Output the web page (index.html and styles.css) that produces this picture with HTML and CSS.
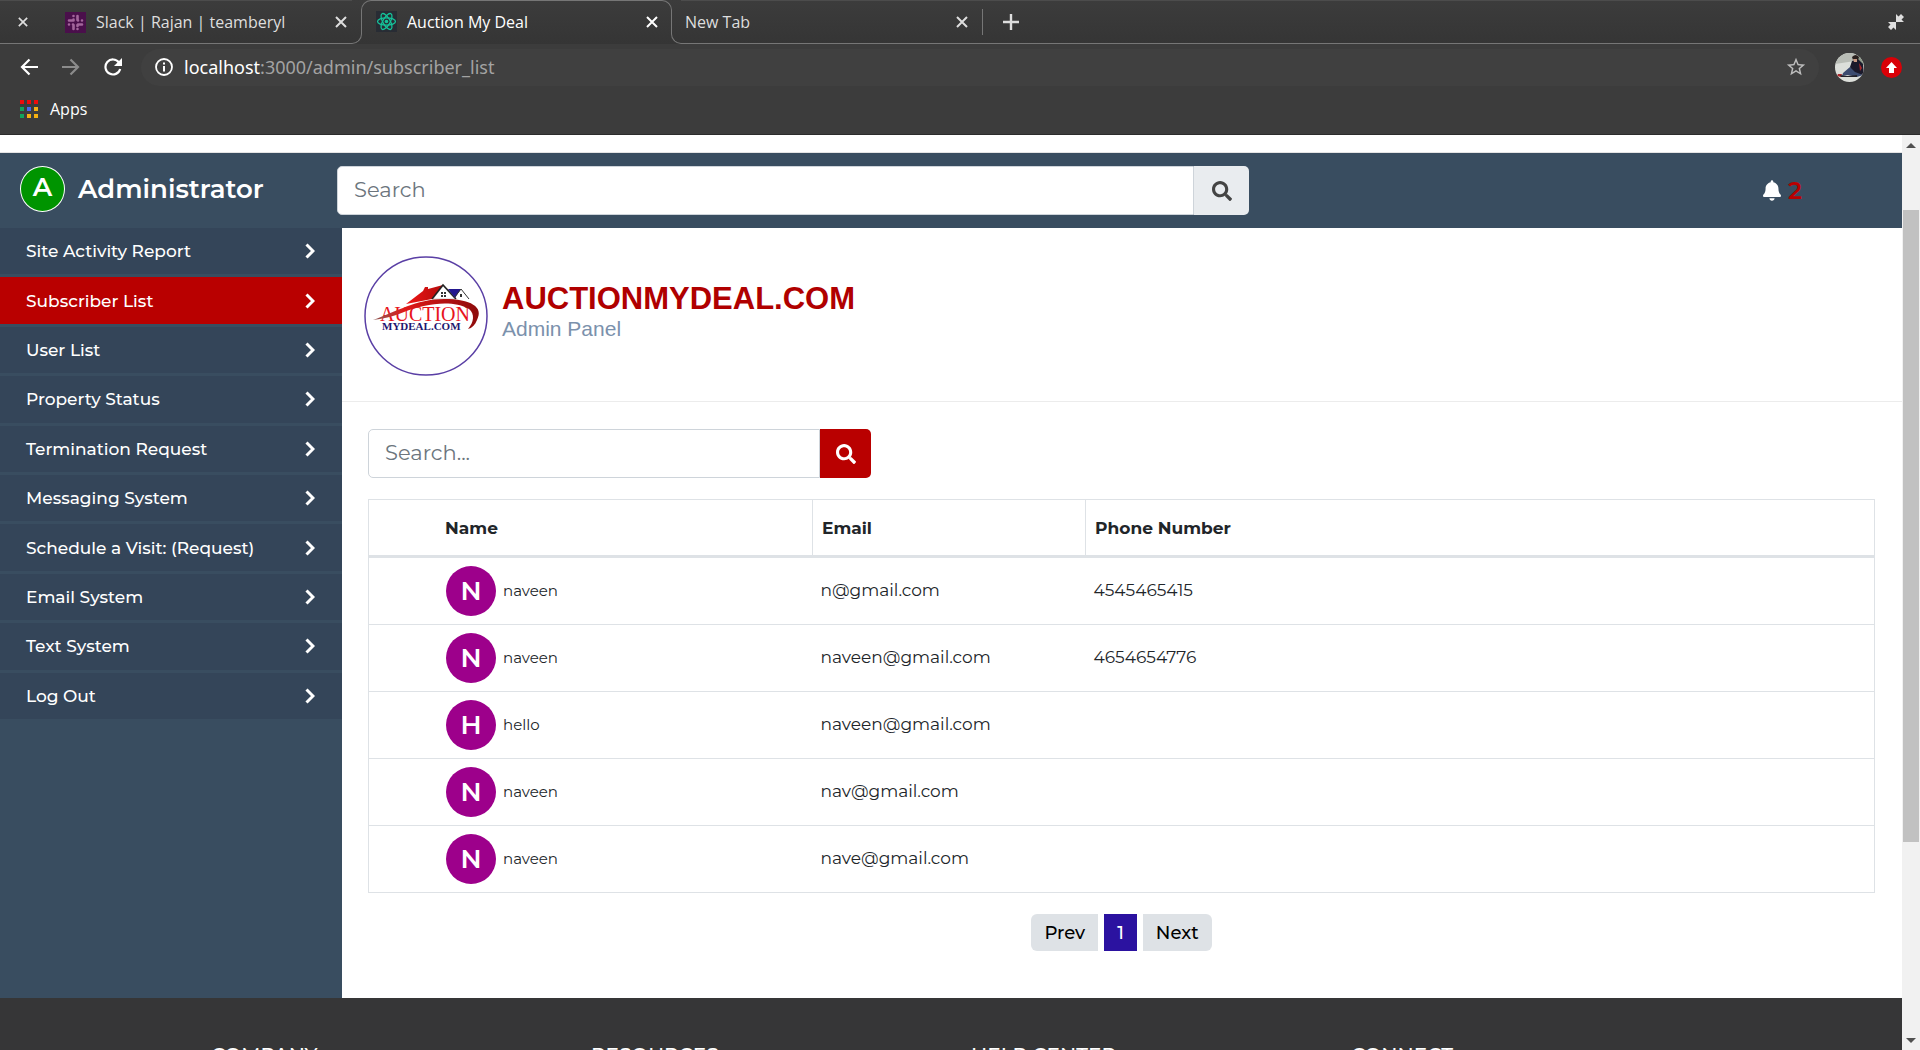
FILE: index.html
```html
<!DOCTYPE html>
<html lang="en">
<head>
<meta charset="utf-8">
<meta name="viewport" content="width=device-width, initial-scale=1">
<title>Auction My Deal</title>
<link rel="stylesheet" href="styles.css">
</head>
<body>
<svg class="defs" aria-hidden="true">
  <symbol id="close" viewBox="0 0 12 12"><path d="M1 1l10 10M11 1L1 11" fill="none" stroke="currentColor" stroke-width="2"/></symbol>
  <symbol id="chevron" viewBox="0 0 10 16"><path d="M1.500 1.500L8 8l-6.500 6.500" fill="none" stroke="currentColor" stroke-width="3"/></symbol>
  <symbol id="search" viewBox="0 0 512 512"><path fill="currentColor" d="M505 442.700L405.300 343c-4.500-4.500-10.600-7-17-7H372c27.600-35.300 44-79.700 44-128C416 93.100 322.900 0 208 0S0 93.100 0 208s93.100 208 208 208c48.300 0 92.700-16.400 128-44v16.300c0 6.400 2.500 12.500 7 17l99.700 99.700c9.400 9.400 24.600 9.400 33.900 0l28.300-28.300c9.400-9.400 9.400-24.600.1-34zM208 336c-70.700 0-128-57.200-128-128 0-70.700 57.200-128 128-128 70.700 0 128 57.200 128 128 0 70.700-57.200 128-128 128z"/></symbol>
</svg>

<header class="browser">
  <div class="tabstrip">
    <div class="strip strip-left">
      <button class="icon-btn" aria-label="Close window"><svg class="close-sm"><use href="#close"/></svg></button>
      <svg class="favicon" viewBox="0 0 21 21" aria-hidden="true"><rect width="21" height="21" fill="#4a0f4b"/><g stroke="#a3669c" stroke-width="2.600" stroke-linecap="round"><path d="M8.500 7.500v1M8.500 4v0M12.500 4v4M8.500 13v4M12.500 17v0M12.500 13v1M4 8.500h4.500M13 8.500h0M17 8.500h0M4 12.500h0M8 12.500h0M13 12.500h4"/></g></svg>
      <span class="tab-title">Slack | Rajan | teamberyl</span>
      <button class="icon-btn" aria-label="Close tab"><svg class="close"><use href="#close"/></svg></button>
    </div>
    <div class="corner corner-left"></div>
    <div class="tab-active">
      <svg class="favicon" viewBox="0 0 21 21" aria-hidden="true"><rect width="21" height="21" fill="#282c34"/><g fill="none" stroke="#15c39a" stroke-width="1.300"><ellipse cx="10.500" cy="10.500" rx="9" ry="3.600"/><ellipse cx="10.500" cy="10.500" rx="9" ry="3.600" transform="rotate(60 10.500 10.500)"/><ellipse cx="10.500" cy="10.500" rx="9" ry="3.600" transform="rotate(120 10.500 10.500)"/></g><circle cx="10.500" cy="10.500" r="1.800" fill="#15c39a"/></svg>
      <span class="tab-title">Auction My Deal</span>
      <button class="icon-btn" aria-label="Close tab"><svg class="close"><use href="#close"/></svg></button>
    </div>
    <div class="corner corner-right"></div>
    <div class="strip strip-right">
      <div class="tab-idle">
        <span class="tab-title">New Tab</span>
        <button class="icon-btn" aria-label="Close tab"><svg class="close"><use href="#close"/></svg></button>
      </div>
      <button class="icon-btn new-tab" aria-label="New tab"><svg width="16" height="16" viewBox="0 0 16 16"><path d="M8 0v16M0 8h16" stroke="currentColor" stroke-width="2.400"/></svg></button>
      <button class="icon-btn restore" aria-label="Restore window"><svg width="16" height="16" viewBox="0 0 16 16"><path fill="currentColor" d="M8 0l2.500 2.500L13 0l3 3-2.500 2.500L16 8H8zM8 16l-2.500-2.500L3 16l-3-3 2.500-2.500L0 8h8z"/></svg></button>
    </div>
  </div>

  <div class="toolbar">
    <button class="icon-btn" aria-label="Back"><svg width="18" height="18" viewBox="0 0 18 18"><path d="M18 9H2M9.500 1.500L2 9l7.500 7.500" fill="none" stroke="currentColor" stroke-width="2.200"/></svg></button>
    <button class="icon-btn dim" aria-label="Forward"><svg width="18" height="18" viewBox="0 0 18 18"><path d="M0 9h16M8.500 1.500L16 9l-7.500 7.500" fill="none" stroke="currentColor" stroke-width="2.200"/></svg></button>
    <button class="icon-btn" aria-label="Reload"><svg width="18" height="18" viewBox="0 0 18 18"><path d="M15 4.500A7.500 7.500 0 1 0 16.200 11" fill="none" stroke="currentColor" stroke-width="2.200"/><path d="M18 0v8h-8z" fill="currentColor"/></svg></button>
    <div class="address">
      <svg width="18" height="18" viewBox="0 0 18 18" aria-hidden="true"><circle cx="9" cy="9" r="8" fill="none" stroke="currentColor" stroke-width="1.800"/><path d="M9 8v5.500M9 4.500v2" stroke="currentColor" stroke-width="2"/></svg>
      <span class="url"><span class="host">localhost</span>:3000/admin/subscriber_list</span>
      <button class="icon-btn star" aria-label="Bookmark this page"><svg width="22" height="22" viewBox="0 0 24 24"><path fill="currentColor" d="M22 9.240l-7.190-.62L12 2 9.190 8.630 2 9.240l5.460 4.730L5.820 21 12 17.270 18.180 21l-1.630-7.030L22 9.240zM12 15.400l-3.760 2.270 1-4.280-3.320-2.880 4.380-.38L12 6.100l1.710 4.040 4.380.38-3.320 2.880 1 4.280L12 15.400z"/></svg></button>
    </div>
    <button class="icon-btn" aria-label="Profile"><svg width="29" height="29" viewBox="0 0 29 29"><clipPath id="round"><circle cx="14.500" cy="14.500" r="14.500"/></clipPath><g clip-path="url(#round)"><rect width="29" height="29" fill="#dcdfda"/><path fill="#b9bdb6" d="M0 0h20v8L0 11z"/><path fill="#8f9a8b" d="M22 0h7v12h-5z"/><path fill="#1b1a2b" d="M17 8l6-2 5 5 1 10-7 2-5-3-2-6z"/><path fill="#2a211f" d="M17 4q4-4 7 0l-1 3h-5z"/><path fill="#c89a83" d="M18 6h4v3h-3z"/><path fill="#3c4c70" d="M8 20l7-6 5 5 8 3-6 2-9-2-6 1z"/><path fill="#a8282b" d="M24 10l3 5-2 3zM3 21l4 0-1 3-4-1z"/><path fill="#22222a" d="M5 22l7 1 10-1v2H6z"/></g></svg></button>
    <button class="icon-btn update" aria-label="Update available"><svg width="21" height="21" viewBox="0 0 21 21"><circle cx="10.500" cy="10.500" r="10.500" fill="#d90007"/><path fill="#fff" d="M10.500 5L16 11h-3v5H8v-5H5z"/></svg></button>
  </div>

  <div class="bookmarks">
    <a class="apps" href="#apps">
      <svg width="18" height="18" viewBox="0 0 18 18" aria-hidden="true"><path fill="#f00b0b" d="M0 0h4v4H0zM7 0h4v4H7zM14 0h4v4h-4z"/><path fill="#12a45c" d="M0 7h4v4H0zM0 14h4v4H0z"/><path fill="#4a66f0" d="M7 7h4v4H7z"/><path fill="#f5b012" d="M14 7h4v4h-4zM7 14h4v4H7zM14 14h4v4h-4z"/></svg>
      Apps
    </a>
  </div>
</header>

<div class="viewport">
  <div class="page">
    <div class="page-gap"></div>
    <header class="topbar">
      <div class="brand"><span class="brand-avatar">A</span><span class="brand-name">Administrator</span></div>
      <form class="searchbox global-search">
        <label class="sr-only" for="global-search">Search</label>
        <input id="global-search" type="text" placeholder="Search">
        <button type="button" aria-label="Search"><svg width="20" height="20"><use href="#search"/></svg></button>
      </form>
      <a class="alerts" href="#notifications" aria-label="2 notifications">
        <svg width="18" height="21" viewBox="0 0 448 512" aria-hidden="true"><path fill="#fff" d="M224 512c35.320 0 63.970-28.650 63.970-64H160.030c0 35.350 28.650 64 63.970 64zm215.390-149.710c-19.320-20.760-55.470-51.990-55.470-154.290 0-77.700-54.480-139.900-127.940-155.160V32c0-17.670-14.320-32-31.980-32s-31.980 14.330-31.980 32v20.840C118.560 68.100 64.080 130.300 64.080 208c0 102.300-36.150 133.530-55.470 154.290-6 6.450-8.660 14.160-8.610 21.710.11 16.400 12.980 32 32.100 32h383.800c19.120 0 32-15.600 32.100-32 .05-7.550-2.610-15.270-8.610-21.710z"/></svg>
        <span>2</span>
      </a>
    </header>

    <div class="body">
      <nav class="sidebar" aria-label="Admin">
        <ul class="menu">
          <li><a href="#activity">Site Activity Report<svg><use href="#chevron"/></svg></a></li>
          <li><a class="current" href="#subscribers" aria-current="page">Subscriber List<svg><use href="#chevron"/></svg></a></li>
          <li><a href="#users">User List<svg><use href="#chevron"/></svg></a></li>
          <li><a href="#property">Property Status<svg><use href="#chevron"/></svg></a></li>
          <li><a href="#termination">Termination Request<svg><use href="#chevron"/></svg></a></li>
          <li><a href="#messaging">Messaging System<svg><use href="#chevron"/></svg></a></li>
          <li><a href="#schedule">Schedule a Visit: (Request)<svg><use href="#chevron"/></svg></a></li>
          <li><a href="#email">Email System<svg><use href="#chevron"/></svg></a></li>
          <li><a href="#text">Text System<svg><use href="#chevron"/></svg></a></li>
          <li><a href="#logout">Log Out<svg><use href="#chevron"/></svg></a></li>
        </ul>
      </nav>

      <main class="content">
        <div class="masthead">
          <svg class="logo" width="124" height="120" viewBox="0 0 124 120" role="img" aria-label="Auction My Deal logo">
            <defs>
              <linearGradient id="swoosh" x1="0" x2="1"><stop offset="0" stop-color="#8a5a55"/><stop offset=".3" stop-color="#e01818"/><stop offset="1" stop-color="#8d0c0c"/></linearGradient>
              <linearGradient id="roof" x1="0" x2="1"><stop offset="0" stop-color="#f01616"/><stop offset="1" stop-color="#b30c0c"/></linearGradient>
            </defs>
            <ellipse cx="62" cy="60" rx="61" ry="59" fill="#fff" stroke="#5a3fa5" stroke-width="1.500"/>
            <path fill="url(#roof)" d="M42 48l17-13 2-4h3v2l15-4-11 14z"/>
            <path fill="#fff" stroke="#999" stroke-width=".5" d="M69 43l10-13 12 13z"/>
            <path fill="none" stroke="#222" stroke-width="1.500" d="M68 43l11-14 13 14"/>
            <path fill="#23178f" d="M84 33l13 0-6 9z"/>
            <path fill="none" stroke="#333" stroke-width="1" d="M90 42l7-9 8 10"/>
            <path fill="#333" d="M77 36h2v2h-2zM80 36h2v2h-2zM77 39h2v2h-2zM80 39h2v2h-2zM96 38h2v3h-2z"/>
            <text class="logo-top" x="16" y="65">AUCTION</text>
            <text class="logo-bottom" x="18" y="74">MYDEAL.COM</text>
            <path fill="url(#swoosh)" d="M9 64C32 56 52 43 80 43c27 0 40 8 33 21-2 5-5 8-9 9 6-7 7-15 1-20C88 43 60 48 40 56 28 61 18 63 9 64z"/>
          </svg>
          <div class="masthead-text">
            <h1>AUCTIONMYDEAL.COM</h1>
            <p>Admin Panel</p>
          </div>
        </div>

        <section class="subscribers">
          <form class="searchbox list-search">
            <label class="sr-only" for="list-search">Search subscribers</label>
            <input id="list-search" type="text" placeholder="Search...">
            <button type="button" aria-label="Search subscribers"><svg width="20" height="20"><use href="#search"/></svg></button>
          </form>

          <table>
            <colgroup><col class="col-name"><col class="col-email"><col></colgroup>
            <thead><tr><th scope="col">Name</th><th scope="col">Email</th><th scope="col">Phone Number</th></tr></thead>
            <tbody>
              <tr><td><div class="person"><span class="initial">N</span>naveen</div></td><td>n@gmail.com</td><td>4545465415</td></tr>
              <tr><td><div class="person"><span class="initial">N</span>naveen</div></td><td>naveen@gmail.com</td><td>4654654776</td></tr>
              <tr><td><div class="person"><span class="initial">H</span>hello</div></td><td>naveen@gmail.com</td><td></td></tr>
              <tr><td><div class="person"><span class="initial">N</span>naveen</div></td><td>nav@gmail.com</td><td></td></tr>
              <tr><td><div class="person"><span class="initial">N</span>naveen</div></td><td>nave@gmail.com</td><td></td></tr>
            </tbody>
          </table>

          <nav class="pager" aria-label="Pages">
            <button>Prev</button><button class="on" aria-current="page">1</button><button>Next</button>
          </nav>
        </section>
      </main>
    </div>

    <footer class="footer">
      <h2>COMPANY</h2><h2>RESOURCES</h2><h2>HELP CENTER</h2><h2>CONNECT</h2>
    </footer>
  </div>

  <div class="scrollbar" aria-hidden="true">
    <svg width="10" height="5" viewBox="0 0 10 5"><path d="M0 5l5-5 5 5z" fill="#505050"/></svg>
    <div class="track"><div class="thumb"></div></div>
    <svg width="10" height="5" viewBox="0 0 10 5"><path d="M0 0l5 5 5-5z" fill="#505050"/></svg>
  </div>
</div>
</body>
</html>
```
FILE: styles.css
```css
* { box-sizing: border-box; }

body {
  display: flex;
  flex-direction: column;
  height: 100vh;
  margin: 0;
  overflow: hidden;
  font-family: Montserrat, Inter, sans-serif;
  color: #212529;
  background: #fff;
}

button, input { font: inherit; }
button { cursor: pointer; }
a { color: inherit; text-decoration: none; }

.defs { position: absolute; width: 0; height: 0; }

.sr-only {
  position: absolute;
  width: 1px;
  height: 1px;
  overflow: hidden;
  clip-path: inset(50%);
}

/* Browser frame */
.browser {
  flex: none;
  font-family: "Open Sans", "Noto Sans", sans-serif;
  font-size: 16px;
  color: #fff;
  background: #3c3c3c;
  border-bottom: 1px solid #2b2b2b;
}

.icon-btn {
  display: flex;
  flex: none;
  padding: 0;
  border: 0;
  color: inherit;
  background: none;
}

.tabstrip {
  display: flex;
  height: 44px;
  background: linear-gradient(#3c3c3c, #353535);
}

.strip {
  display: flex;
  align-items: center;
  border-top: 1px solid #4c4c4c;
  border-bottom: 1px solid #767676;
  color: #dedede;
}

.strip-left { width: 352px; padding: 0 5px 0 18px; }
.strip-right { flex: 1; padding-right: 16px; }

.corner { align-self: flex-end; width: 10px; height: 10px; border-bottom: 1px solid #767676; }
.corner-left { border-right: 1px solid #767676; border-bottom-right-radius: 10px; }
.corner-right { border-left: 1px solid #767676; border-bottom-left-radius: 10px; }

.tab-active {
  display: flex;
  align-items: center;
  width: 311px;
  height: 34px;
  margin: 0 -1px;
  padding: 8px 13px 0 14px;
  border: 1px solid #767676;
  border-bottom: 0;
  border-radius: 10px 10px 0 0;
}

.tab-idle {
  display: flex;
  align-items: center;
  width: 302px;
  height: 26px;
  padding-right: 14px;
  border-right: 1px solid #767676;
}

.tab-title { flex: 1; margin-left: 10px; line-height: 24px; white-space: nowrap; }
.tab-idle .tab-title { margin-left: 4px; }
.favicon { width: 21px; height: 21px; }
.close { width: 12px; height: 12px; }
.close-sm { width: 10px; height: 10px; margin-right: 37px; }
.new-tab { margin-left: 20px; }
.restore { margin-left: auto; }

.toolbar {
  display: flex;
  align-items: center;
  gap: 24px;
  height: 46px;
  padding: 0 18px 0 20px;
}

.dim { color: #8b8b8b; }

.address {
  display: flex;
  flex: 1;
  align-items: center;
  gap: 11px;
  height: 37px;
  margin: 0 -8px 0 -5px;
  padding: 0 12px 0 14px;
  border-radius: 19px;
  background: #404040;
}

.url { flex: 1; font-family: "Noto Sans", sans-serif; font-size: 18px; line-height: 24px; color: #a3a3a3; }
.host { color: #fff; }
.star { color: #bdbdbd; }
.update { margin-left: -7px; }

.bookmarks { height: 44px; padding: 7px 20px; }
.apps { display: inline-flex; align-items: center; gap: 12px; line-height: 24px; }

/* Web page */
.viewport { display: flex; flex: 1; min-height: 0; }
.page { flex: 1; min-width: 0; overflow: hidden; }
.page-gap { height: 18px; border-bottom: 1px solid #e4e4e4; }

.topbar {
  display: flex;
  align-items: center;
  height: 75px;
  padding: 0 100px 0 20px;
  color: #fff;
  background: #394d60;
}

.brand { display: flex; align-items: center; gap: 13px; width: 317px; padding-bottom: 4px; }

.brand-avatar {
  width: 45px;
  height: 46px;
  border: 1px solid #fff;
  border-radius: 50%;
  font-size: 26px;
  font-weight: 600;
  line-height: 40px;
  text-align: center;
  background: #009400;
}

.brand-name { font-size: 26px; font-weight: 600; line-height: 44px; }

.searchbox { display: flex; height: 49px; }

.searchbox input {
  flex: 1;
  min-width: 0;
  padding: 0 16px 2px;
  border: 1px solid #ced4da;
  border-radius: 5px 0 0 5px;
  font-size: 21px;
  color: #495057;
  background: #fff;
}

.searchbox input::placeholder { color: #6c757d; opacity: 1; }

.searchbox button {
  display: flex;
  align-items: center;
  justify-content: center;
  padding: 0;
  border: 0;
  border-radius: 0 5px 5px 0;
}

.global-search { flex: 0 1 912px; }
.global-search button { width: 55px; color: #444; background: #e9ecef; }

.alerts { display: flex; align-items: center; gap: 7px; margin-left: auto; font-size: 24px; font-weight: 600; line-height: 30px; color: #b90000; }

.body { display: flex; }

.sidebar { flex: none; width: 342px; background: #394d60; }

.menu {
  display: grid;
  grid-auto-rows: 1fr;
  gap: 3px;
  height: 491px;
  margin: 0;
  padding: 0;
  list-style: none;
}

.menu a {
  display: flex;
  align-items: center;
  justify-content: space-between;
  height: 100%;
  padding: 0 27px 0 26px;
  font-size: 17px;
  font-weight: 500;
  color: #fff;
  background: #344559;
}

.menu a.current { background: #b90000; }
.menu svg { width: 10px; height: 16px; }

.content { flex: 1; min-width: 0; }

.masthead {
  display: flex;
  gap: 14px;
  height: 174px;
  padding: 28px 22px;
  border-bottom: 1px solid #ececec;
  font-family: "Liberation Sans", Arial, sans-serif;
}

.logo-top { font: 20px "Liberation Serif", serif; fill: #e8141c; }
.logo-bottom { font: bold 11px "Liberation Serif", serif; fill: #1d1670; }

.masthead-text { padding-top: 25px; }
.masthead h1 { margin: 0; font-size: 31px; line-height: 36px; color: #b00000; }
.masthead p { margin: 0; font-size: 21px; line-height: 24px; color: #7b91ac; }

.subscribers { padding: 27px 27px 47px 26px; }

.list-search { width: 503px; margin-bottom: 21px; }
.list-search button { width: 51px; color: #fff; background: #b90000; }

table {
  width: 100%;
  table-layout: fixed;
  border: 1px solid #dee2e6;
  border-collapse: collapse;
  font-size: 17px;
  line-height: 24px;
}

.col-name { width: 444px; }
.col-email { width: 273px; }

th {
  height: 57px;
  padding: 0 9px;
  border: 1px solid #dee2e6;
  border-bottom: 3px solid #dee2e6;
  font-weight: 700;
  text-align: left;
}

td { height: 67px; padding: 0 8px 3px; border-top: 1px solid #dee2e6; }
tbody tr:first-child td { height: 68px; }
th:first-child { padding-left: 76px; }
td:first-child { padding: 0 0 0 77px; }

.person { display: flex; align-items: center; gap: 7px; font-size: 15px; }

.initial {
  width: 50px;
  height: 50px;
  border-radius: 50%;
  font-size: 26px;
  font-weight: 600;
  line-height: 50px;
  text-align: center;
  color: #fff;
  background: #9d008b;
}

.pager { display: flex; justify-content: center; gap: 6px; margin-top: 21px; }

.pager button {
  height: 37px;
  padding: 0 13px;
  border: 0;
  font-size: 18px;
  font-weight: 500;
  color: #000;
  background: #dee2e6;
}

.pager button:first-child { border-radius: 6px 0 0 6px; }
.pager button:last-child { border-radius: 0 6px 6px 0; }
.pager .on { color: #fff; background: #2b12a0; }

.footer {
  display: grid;
  grid-template-columns: repeat(4, 380px);
  padding: 45px 0 40px 211px;
  color: #fff;
  background: #363637;
}

.footer h2 { margin: 0; font-size: 20px; font-weight: 500; line-height: 24px; }

.scrollbar {
  display: flex;
  flex: none;
  flex-direction: column;
  align-items: center;
  width: 18px;
  padding: 8px 0 7px;
  background: #f1f1f1;
}

.track { flex: 1; width: 16px; padding: 62px 0 196px; }
.thumb { height: 100%; background: #c1c1c1; }
```
